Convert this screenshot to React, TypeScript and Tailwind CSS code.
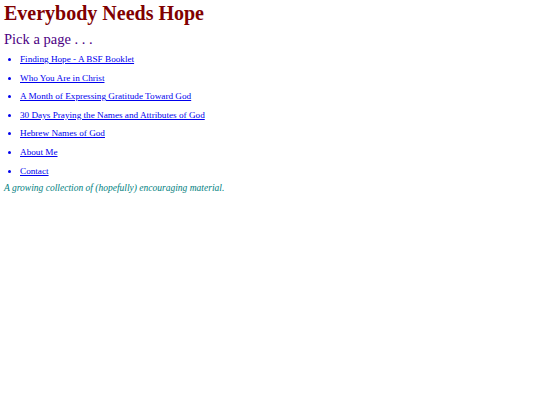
const links = [
  'Finding Hope - A BSF Booklet',
  'Who You Are in Christ',
  'A Month of Expressing Gratitude Toward God',
  '30 Days Praying the Names and Attributes of God',
  'Hebrew Names of God',
  'About Me',
  'Contact',
]

export default function App() {
  return (
    <div className="min-h-screen bg-white px-[4px] pt-[1px] font-['Liberation_Serif',serif]">
      <h1 className="text-[20px] leading-[24px] font-bold text-[#800000]">Everybody Needs Hope</h1>
      <h2 className="mt-[5px] text-[14.5px] leading-[18px] text-[#4b0082]">Pick a page . . .</h2>
      <ul className="mt-[5px] list-disc pl-[16px] text-[9.2px] leading-[12px] text-[#0000ee]">
        {links.map((t) => (
          <li key={t} className="mb-[6.6px]">
            <a href="#" className="underline">{t}</a>
          </li>
        ))}
      </ul>
      <p className="-mt-[2px] text-[9.5px] italic text-[#008080]">
        A growing collection of (hopefully) encouraging material.
      </p>
    </div>
  )
}
